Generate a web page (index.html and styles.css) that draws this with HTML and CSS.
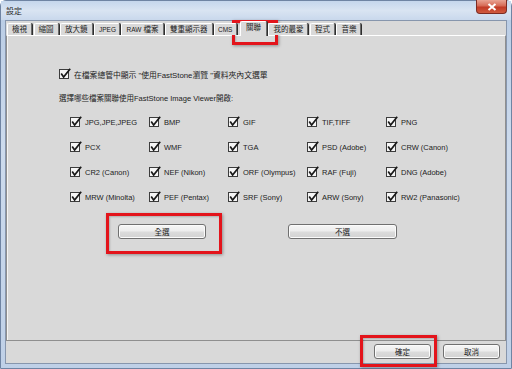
FILE: index.html
```html
<!DOCTYPE html>
<html>
<head>
<meta charset="utf-8">
<link rel="stylesheet" href="styles.css">
</head>
<body>
<svg class="defs" width="0" height="0">
  <symbol id="chk" viewBox="0 0 12 12">
    <rect x="0.5" y="1.5" width="9" height="9" fill="#f6f6f6" stroke="#3c3c3c"/>
    <path d="M2.2 5.6 L4.6 9 L11.2 0.8" fill="none" stroke="#1a1a1a" stroke-width="1.7"/>
  </symbol>
</svg>
<div class="window">
  <div class="titlebar">
    <span class="title">設定</span>
    <div class="close">
      <svg width="10" height="8" viewBox="0 0 10 8"><path d="M1.5 1 L8.5 7 M8.5 1 L1.5 7" stroke="#fff" stroke-width="2"/></svg>
    </div>
  </div>
  <div class="client">
    <div class="tabs">
      <div class="tab">檢視</div>
      <div class="tab">縮圖</div>
      <div class="tab">放大鏡</div>
      <div class="tab latin">JPEG</div>
      <div class="tab"><span class="raw">RAW</span> 檔案</div>
      <div class="tab">雙重顯示器</div>
      <div class="tab latin cms">CMS</div>
      <div class="tab active">關聯</div>
      <div class="tab">我的最愛</div>
      <div class="tab">程式</div>
      <div class="tab">音樂</div>
    </div>
    <div class="panel">
      <div class="opt lead"><svg class="cb"><use href="#chk"/></svg><span>在檔案總管中顯示 "使用FastStone瀏覽 "資料夾內文選單</span></div>
      <div class="prompt">選擇哪些檔案關聯使用FastStone Image Viewer開啟:</div>
      <div class="grid">
        <div class="opt"><svg class="cb"><use href="#chk"/></svg><span>JPG,JPE,JPEG</span></div>
        <div class="opt"><svg class="cb"><use href="#chk"/></svg><span>BMP</span></div>
        <div class="opt"><svg class="cb"><use href="#chk"/></svg><span>GIF</span></div>
        <div class="opt"><svg class="cb"><use href="#chk"/></svg><span>TIF,TIFF</span></div>
        <div class="opt"><svg class="cb"><use href="#chk"/></svg><span>PNG</span></div>
        <div class="opt"><svg class="cb"><use href="#chk"/></svg><span>PCX</span></div>
        <div class="opt"><svg class="cb"><use href="#chk"/></svg><span>WMF</span></div>
        <div class="opt"><svg class="cb"><use href="#chk"/></svg><span>TGA</span></div>
        <div class="opt"><svg class="cb"><use href="#chk"/></svg><span>PSD (Adobe)</span></div>
        <div class="opt"><svg class="cb"><use href="#chk"/></svg><span>CRW (Canon)</span></div>
        <div class="opt"><svg class="cb"><use href="#chk"/></svg><span>CR2 (Canon)</span></div>
        <div class="opt"><svg class="cb"><use href="#chk"/></svg><span>NEF (Nikon)</span></div>
        <div class="opt"><svg class="cb"><use href="#chk"/></svg><span>ORF (Olympus)</span></div>
        <div class="opt"><svg class="cb"><use href="#chk"/></svg><span>RAF (Fuji)</span></div>
        <div class="opt"><svg class="cb"><use href="#chk"/></svg><span>DNG (Adobe)</span></div>
        <div class="opt"><svg class="cb"><use href="#chk"/></svg><span>MRW (Minolta)</span></div>
        <div class="opt"><svg class="cb"><use href="#chk"/></svg><span>PEF (Pentax)</span></div>
        <div class="opt"><svg class="cb"><use href="#chk"/></svg><span>SRF (Sony)</span></div>
        <div class="opt"><svg class="cb"><use href="#chk"/></svg><span>ARW (Sony)</span></div>
        <div class="opt"><svg class="cb"><use href="#chk"/></svg><span>RW2 (Panasonic)</span></div>
      </div>
      <div class="btnrow">
        <button class="btn all">全選</button>
        <button class="btn none">不選</button>
      </div>
    </div>
    <div class="footer">
      <button class="btn foot">確定</button>
      <button class="btn foot">取消</button>
    </div>
  </div>
  <div class="mark mark-tab"></div>
  <div class="mark mark-all"></div>
  <div class="mark mark-ok"></div>
</div>
</body>
</html>
```

FILE: styles.css
```css
* { box-sizing: border-box; }
html, body { margin: 0; padding: 0; }
body {
  width: 512px;
  height: 369px;
  overflow: hidden;
  background: #ffffff;
  font-family: "Liberation Sans", "Noto Sans CJK TC", sans-serif;
  font-size: 7.5px;
  color: #1c1c1c;
}
.defs { position: absolute; }
.window {
  position: relative;
  width: 512px;
  height: 369px;
  background: linear-gradient(180deg, #b8cbe4 0%, #cddbed 40%, #bfd0e7 100%);
  border: 1px solid #6f84a3;
  border-radius: 6px 6px 0 0;
  display: flex;
  flex-direction: column;
}
.titlebar {
  height: 19px;
  display: flex;
  justify-content: space-between;
  align-items: flex-start;
  padding-left: 5px;
  padding-right: 4px;
  background: linear-gradient(180deg, #c5d6ec 0%, #d9e4f2 50%, #c9d8ec 100%);
}
.title {
  margin-top: 4px;
  font-size: 8px;
  color: #2c2c2c;
}
.close {
  width: 31px;
  height: 14px;
  margin-top: -1px;
  border: 1px solid #7c2b22;
  border-top: none;
  border-radius: 0 0 4px 4px;
  background: linear-gradient(180deg, #e9a393 0%, #d66a55 45%, #c23a26 55%, #cf5a3f 100%);
  display: flex;
  align-items: center;
  justify-content: center;
}
.client {
  flex: 1;
  margin: 0 4px 4px 4px;
  background: #d9d9d9;
  border: 1px solid #8796ad;
  display: flex;
  flex-direction: column;
}
.tabs {
  display: flex;
  align-items: flex-end;
  height: 14px;
  padding-left: 1px;
  gap: 1.5px;
  position: relative;
  z-index: 2;
}
.tab {
  height: 12px;
  padding: 0 4px;
  line-height: 11px;
  border-top: 1px solid #ffffff;
  border-left: 1px solid #ffffff;
  border-right: 1px solid #6a6a6a;
  box-shadow: 1px 0 0 #2e2e2e;
  border-radius: 2px 2px 0 0;
  background: #d9d9d9;
  white-space: nowrap;
}
.tab.latin { font-size: 6.5px; padding: 0 3px 0 4px; }
.tab.cms { padding: 0 4px 0 3px; }
.raw { font-size: 6.5px; }
.tab.active {
  height: 15px;
  margin-bottom: -1px;
  padding: 0 5px;
  line-height: 12px;
  margin-left: 1px;
}
.panel {
  height: 306px;
  border-top: 1px solid #ffffff;
  border-left: 1px solid #8f8f8f;
  border-right: 1px solid #8f8f8f;
  border-bottom: 1px solid #8f8f8f;
  box-shadow: inset 1px 0 0 #f4f4f4;
  padding: 32px 0 0 52px;
  display: flex;
  flex-direction: column;
  align-items: flex-start;
}
.opt {
  display: flex;
  align-items: center;
  height: 12px;
  gap: 3px;
  white-space: nowrap;
}
.cb { width: 12px; height: 12px; flex: none; }
.lead span { font-size: 7.8px; }
.prompt {
  margin-top: 14px;
  height: 10px;
  line-height: 10px;
}
.grid {
  margin-top: 12px;
  margin-left: 11px;
  display: grid;
  grid-template-columns: repeat(5, 79px);
  row-gap: 13px;
}
.btnrow {
  margin-top: 21px;
  margin-left: 59px;
  display: flex;
  gap: 82px;
}
.btn {
  font-family: "Liberation Sans", "Noto Sans CJK TC", sans-serif;
  font-size: 7.5px;
  color: #1c1c1c;
  height: 15px;
  padding: 0;
  border: 1px solid #707070;
  border-radius: 3px;
  background: linear-gradient(180deg, #f6f6f6 0%, #ececec 48%, #dcdcdc 52%, #d2d2d2 100%);
  box-shadow: inset 0 0 0 1px #fbfbfb;
}
.btn.all { width: 88px; }
.btn.none { width: 109px; }
.footer {
  flex: 1;
  display: flex;
  justify-content: flex-end;
  align-items: flex-start;
  padding: 3px 6px 0 0;
  gap: 12px;
}
.btn.foot { width: 57px; }
.mark {
  position: absolute;
  border: 3px solid #e3141b;
  box-shadow: 1px 1px 3px rgba(0,0,0,0.35), inset 1px 1px 2px rgba(0,0,0,0.2);
}
.mark-tab { left: 231px; top: 19px; width: 46px; height: 25px; }
.mark-all { left: 105px; top: 212px; width: 116px; height: 41px; }
.mark-ok { left: 359px; top: 334px; width: 77px; height: 32px; }
```
